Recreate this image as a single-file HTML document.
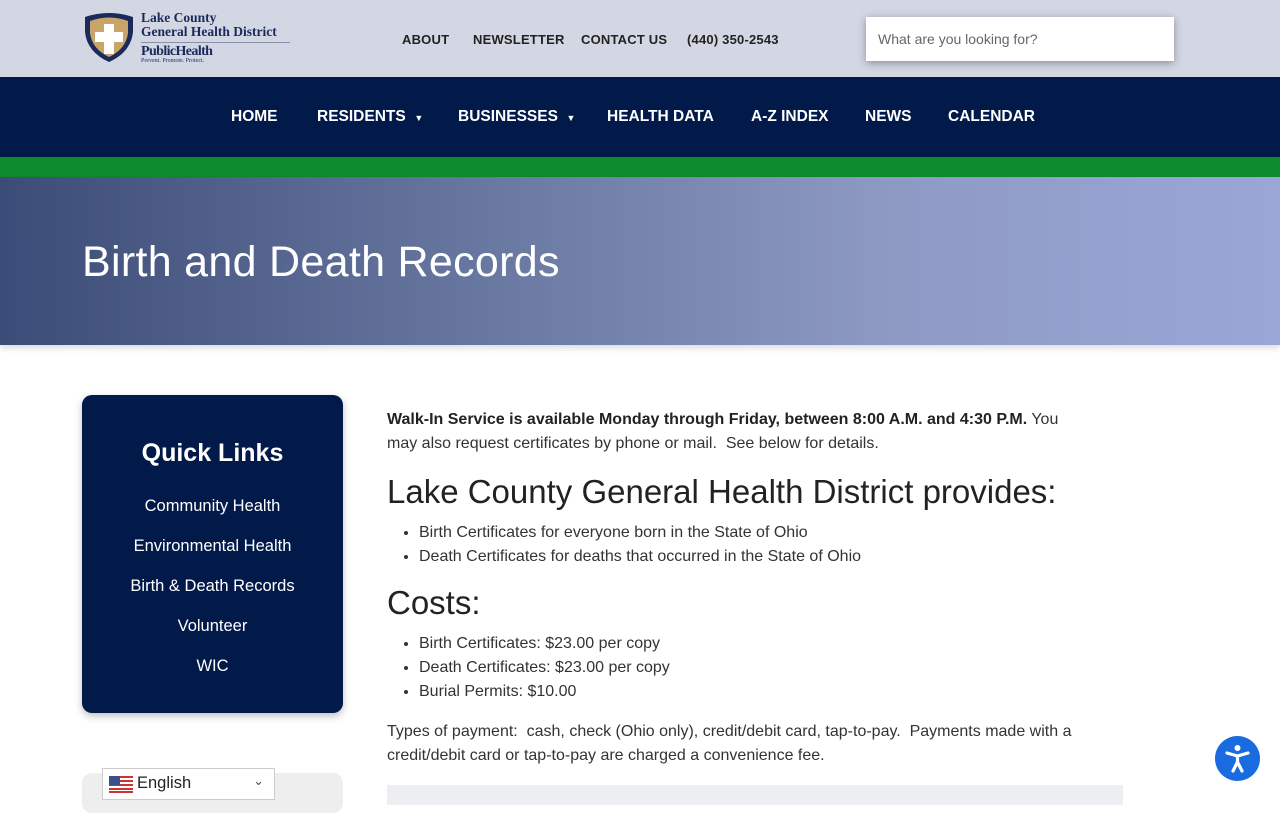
<!DOCTYPE html>
<html><head><meta charset="utf-8"><style>
*{box-sizing:border-box;margin:0;padding:0}
body{width:1280px;height:800px;overflow:hidden;font-family:"Liberation Sans",sans-serif;background:#fff;color:#222;position:relative}
.top{height:77px;background:#d3d7e3;position:relative}
.logo{position:absolute;left:82px;top:12px}
.lt{position:absolute;left:141px;top:11px;font-family:"Liberation Serif",serif;font-weight:bold;color:#1a2a5a;font-size:13.5px;line-height:14px}
.util{position:absolute;top:32px;font-size:13px;font-weight:bold;color:#222;letter-spacing:.2px}
.search{position:absolute;left:866px;top:17px;width:308px;height:44px;background:#fff;box-shadow:0 2px 8px rgba(0,0,0,.35);font-size:14px;color:#666;padding:14px 12px}
.nav{position:absolute;top:77px;left:0;width:1280px;height:80px;background:#021a4a}
.nav span{position:absolute;top:31px;color:#fff;font-weight:bold;font-size:15.5px}
.green{position:absolute;top:157px;height:20px;width:1280px;background:#0e8a2e}
.hero{position:absolute;top:177px;height:168px;width:1280px;background:linear-gradient(90deg,#3c4c78 0%,#6a7aa2 40%,#8e9ac4 70%,#9aa6d6 100%);box-shadow:0 3px 6px rgba(0,0,0,.15)}
.hero h1{position:absolute;left:82px;top:61px;color:#fff;font-size:43px;font-weight:normal;letter-spacing:.3px}
.ql{position:absolute;left:82px;top:395px;width:261px;height:318px;background:#021a4a;border-radius:10px;box-shadow:0 3px 8px rgba(0,0,0,.25);color:#fff;text-align:center}
.ql h3{font-size:25px;margin-top:44px;margin-bottom:18px}
.ql div{font-size:16.5px;height:40px;line-height:40px}
.tr{position:absolute;left:82px;top:773px;width:261px;height:40px;background:#eee;border-radius:10px}
.sel{position:absolute;left:102px;top:768px;width:173px;height:32px;background:#fff;border:1px solid #ccc;font-size:16.5px;color:#222;padding:5px 0 0 34px}
.main{position:absolute;left:387px;top:408px;width:705px;font-size:16px;line-height:24px;color:#333}
.main h2{font-size:33px;font-weight:normal;color:#222;line-height:40px;margin:16px 0 9px;white-space:nowrap}
.main ul{margin-left:32px}
.main li{line-height:24px}
.grey{position:absolute;left:387px;top:785px;width:736px;height:20px;background:#eceef2}
.acc{position:absolute;left:1215px;top:736px;width:45px;height:45px;border-radius:50%;background:#1a6be0}
</style></head><body>
<div class="top">
<svg class="logo" width="54" height="52" viewBox="0 0 54 52"><path d="M3 5 Q27 -3 51 5 L51 20 Q49 40 27 50 Q5 40 3 20Z" fill="#1a2a5a"/><path d="M8 9 Q27 2 46 9 L46 21 Q44 37 27 45 Q10 37 8 21Z" fill="#c9a468"/><path d="M22 12h10v8h9v10h-9v12h-10v-12h-9v-10h9z" fill="#fff"/></svg>
<div class="lt">Lake County<br>General Health District</div>
<div style="position:absolute;left:141px;top:42px;width:149px;border-top:1px solid #8890aa"></div>
<div style="position:absolute;left:141px;top:44px;font-family:'Liberation Serif',serif;font-weight:bold;color:#1a2a5a;font-size:14px;letter-spacing:-.6px">PublicHealth</div>
<div style="position:absolute;left:141px;top:58px;font-family:'Liberation Serif',serif;color:#1a2a5a;font-size:6px">Prevent. Promote. Protect.</div>
<span class="util" style="left:402px">ABOUT</span>
<span class="util" style="left:473px">NEWSLETTER</span>
<span class="util" style="left:581px">CONTACT US</span>
<span class="util" style="left:687px">(440) 350-2543</span>
<div class="search">What are you looking for?</div>
</div>
<div class="nav">
<span style="left:231px">HOME</span>
<span style="left:317px">RESIDENTS &nbsp;<small style="font-size:9px">▼</small></span>
<span style="left:458px">BUSINESSES &nbsp;<small style="font-size:9px">▼</small></span>
<span style="left:607px">HEALTH DATA</span>
<span style="left:751px">A-Z INDEX</span>
<span style="left:865px">NEWS</span>
<span style="left:948px">CALENDAR</span>
</div>
<div class="green"></div>
<div class="hero"><h1>Birth and Death Records</h1></div>
<div class="ql"><h3>Quick Links</h3>
<div>Community Health</div><div>Environmental Health</div><div>Birth &amp; Death Records</div><div>Volunteer</div><div>WIC</div></div>
<div class="tr"></div>
<div class="sel"><svg style="position:absolute;left:6px;top:7px" width="24" height="17"><rect width="24" height="17" fill="#fff"/><g fill="#c33"><rect y="0" width="24" height="2"/><rect y="4" width="24" height="2"/><rect y="8" width="24" height="2"/><rect y="12" width="24" height="2"/><rect y="15" width="24" height="2"/></g><rect width="11" height="9" fill="#3b4f8a"/></svg>English<span style="position:absolute;right:10px;top:4px;font-size:13px;color:#555">⌄</span></div>
<div class="main">
<p><b style="color:#222">Walk-In Service is available Monday through Friday, between 8:00 A.M. and 4:30 P.M.</b> You may also request certificates by phone or mail.&nbsp; See below for details.</p>
<h2 style="margin-top:16px">Lake County General Health District provides:</h2>
<ul><li>Birth Certificates for everyone born in the State of Ohio</li><li>Death Certificates for deaths that occurred in the State of Ohio</li></ul>
<h2 style="margin-top:14px">Costs:</h2>
<ul><li>Birth Certificates: $23.00 per copy</li><li>Death Certificates: $23.00 per copy</li><li>Burial Permits: $10.00</li></ul>
<p style="margin-top:16px">Types of payment:&nbsp; cash, check (Ohio only), credit/debit card, tap-to-pay.&nbsp; Payments made with a credit/debit card or tap-to-pay are charged a convenience fee.</p>
</div>
<div class="grey"></div>
<div class="acc"><svg width="45" height="45" viewBox="0 0 45 45"><circle cx="22.5" cy="12" r="3" fill="#fff"/><path d="M12 17 L22.5 20 L33 17 M22.5 20 V26 M22.5 26 L18 35 M22.5 26 L27 35" stroke="#fff" stroke-width="3.2" fill="none" stroke-linecap="round" stroke-linejoin="round"/></svg></div>
</body></html>
